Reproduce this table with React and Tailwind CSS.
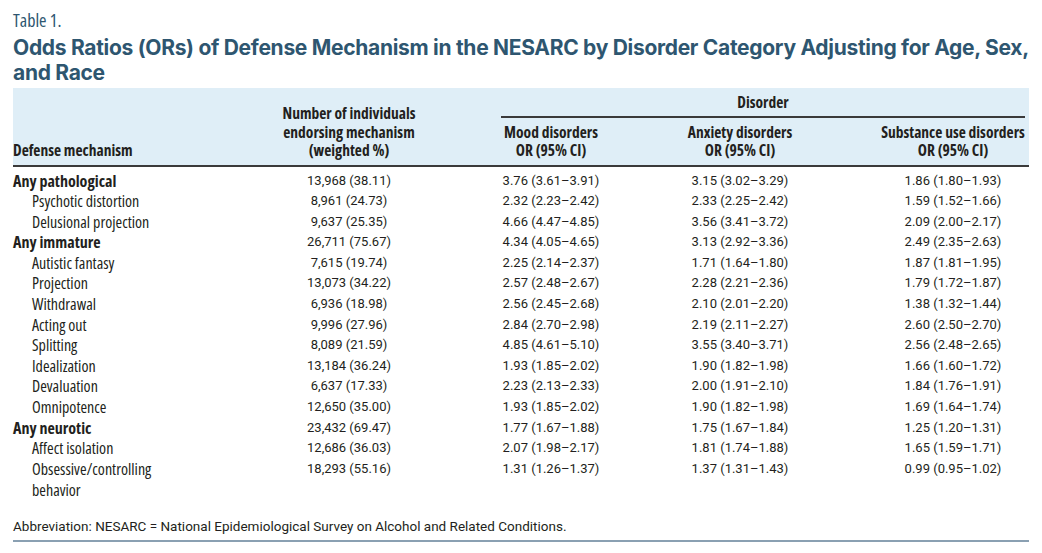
import React from 'react';

const rows = [
    { label: 'Any pathological', group: true, n: '13,968 (38.11)', mood: '3.76 (3.61–3.91)', anx: '3.15 (3.02–3.29)', sub: '1.86 (1.80–1.93)' },
    { label: 'Psychotic distortion', n: '8,961 (24.73)', mood: '2.32 (2.23–2.42)', anx: '2.33 (2.25–2.42)', sub: '1.59 (1.52–1.66)' },
    { label: 'Delusional projection', n: '9,637 (25.35)', mood: '4.66 (4.47–4.85)', anx: '3.56 (3.41–3.72)', sub: '2.09 (2.00–2.17)' },
    { label: 'Any immature', group: true, n: '26,711 (75.67)', mood: '4.34 (4.05–4.65)', anx: '3.13 (2.92–3.36)', sub: '2.49 (2.35–2.63)' },
    { label: 'Autistic fantasy', n: '7,615 (19.74)', mood: '2.25 (2.14–2.37)', anx: '1.71 (1.64–1.80)', sub: '1.87 (1.81–1.95)' },
    { label: 'Projection', n: '13,073 (34.22)', mood: '2.57 (2.48–2.67)', anx: '2.28 (2.21–2.36)', sub: '1.79 (1.72–1.87)' },
    { label: 'Withdrawal', n: '6,936 (18.98)', mood: '2.56 (2.45–2.68)', anx: '2.10 (2.01–2.20)', sub: '1.38 (1.32–1.44)' },
    { label: 'Acting out', n: '9,996 (27.96)', mood: '2.84 (2.70–2.98)', anx: '2.19 (2.11–2.27)', sub: '2.60 (2.50–2.70)' },
    { label: 'Splitting', n: '8,089 (21.59)', mood: '4.85 (4.61–5.10)', anx: '3.55 (3.40–3.71)', sub: '2.56 (2.48–2.65)' },
    { label: 'Idealization', n: '13,184 (36.24)', mood: '1.93 (1.85–2.02)', anx: '1.90 (1.82–1.98)', sub: '1.66 (1.60–1.72)' },
    { label: 'Devaluation', n: '6,637 (17.33)', mood: '2.23 (2.13–2.33)', anx: '2.00 (1.91–2.10)', sub: '1.84 (1.76–1.91)' },
    { label: 'Omnipotence', n: '12,650 (35.00)', mood: '1.93 (1.85–2.02)', anx: '1.90 (1.82–1.98)', sub: '1.69 (1.64–1.74)' },
    { label: 'Any neurotic', group: true, n: '23,432 (69.47)', mood: '1.77 (1.67–1.88)', anx: '1.75 (1.67–1.84)', sub: '1.25 (1.20–1.31)' },
    { label: 'Affect isolation', n: '12,686 (36.03)', mood: '2.07 (1.98–2.17)', anx: '1.81 (1.74–1.88)', sub: '1.65 (1.59–1.71)' },
    { label: 'Obsessive/controlling', label2: 'behavior', n: '18,293 (55.16)', mood: '1.31 (1.26–1.37)', anx: '1.37 (1.31–1.43)', sub: '0.99 (0.95–1.02)' },
];

// condensed face for labels and column heads
const narrow = "font-['Open_Sans',sans-serif] [font-stretch:75%]";
const num = "font-['Roboto',sans-serif] text-[13px] leading-[20.6px] text-center";
const grid = 'grid grid-cols-[247px_178px_226px_152px_213px]';

export default function App() {
    return (
        <div className="w-[1042px] h-[553px] bg-white text-[#231f20] px-[13px] pt-[9px]">
            <div className={`${narrow} text-[18px] leading-[22px] text-[#2e5670]`}>Table 1.</div>
            <h1 className="font-['Inter',sans-serif] font-bold text-[21px] leading-[25px] text-[#2e5670] tracking-[-0.3px] mt-[4px]">
                Odds Ratios (ORs) of Defense Mechanism in the NESARC by Disorder Category Adjusting for Age, Sex,
                <br />
                and Race
            </h1>

            {/* Header */}
            <div className={`${narrow} font-bold text-[15.5px] leading-[18.5px] mt-[3px] bg-[#dfeef7] border-b-2 border-[#3a3a3a] pt-[5px] pb-[5px]`}>
                <div className={grid}>
                    <div className="flex items-end">Defense mechanism</div>
                    <div className="flex items-end justify-center text-center">
                        Number of individuals<br />endorsing mechanism<br />(weighted %)
                    </div>
                    <div className="col-span-3 flex flex-col">
                        <div className="ml-[63px] mr-[4px] text-center border-b-2 border-[#3a3a3a] pb-[4px]">Disorder</div>
                        <div className="grid grid-cols-[226px_152px_213px] mt-[5px] items-end">
                            <div className="text-center">Mood disorders<br />OR (95% CI)</div>
                            <div className="text-center">Anxiety disorders<br />OR (95% CI)</div>
                            <div className="text-center pl-[61px]">Substance use disorders<br />OR (95% CI)</div>
                        </div>
                    </div>
                </div>
            </div>

            {/* Body */}
            <div className="pt-[4px]">
                {rows.map((r) => (
                    <div key={r.label} className={`${grid} items-start`}>
                        <div className={`${narrow} text-[16px] leading-[20.6px] ${r.group ? 'font-bold' : 'pl-[19px]'}`}>
                            {r.label}
                            {r.label2 && <div className="leading-[22px]">{r.label2}</div>}
                        </div>
                        <div className={num}>{r.n}</div>
                        <div className={num}>{r.mood}</div>
                        <div className={num}>{r.anx}</div>
                        <div className={`${num} pl-[61px]`}>{r.sub}</div>
                    </div>
                ))}
            </div>

            <div className="font-['Roboto',sans-serif] text-[13.5px] leading-[18px] mt-[16px] pb-[5px] border-b-2 border-[#8aa0b2]">
                Abbreviation: NESARC = National Epidemiological Survey on Alcohol and Related Conditions.
            </div>
        </div>
    );
}
